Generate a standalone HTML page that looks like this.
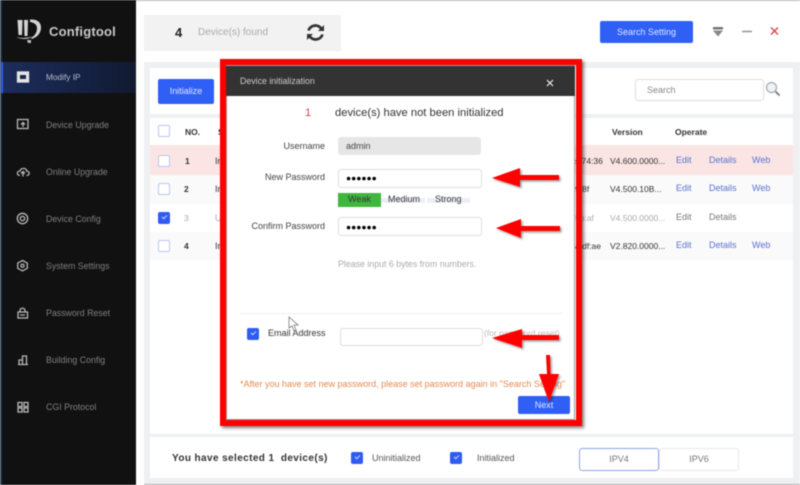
<!DOCTYPE html>
<html><head><meta charset="utf-8">
<style>
html,body{margin:0;padding:0}
body{width:800px;height:485px;overflow:hidden;position:relative;background:#fff;font-family:"Liberation Sans",sans-serif;font-size:9px;color:#333}
#w{position:absolute;left:0;top:0;width:800px;height:485px;overflow:hidden;filter:blur(.45px)}
.a{position:absolute;white-space:nowrap}
.b{position:absolute}
.nav{position:absolute;left:46px;color:#808080;font-size:8.8px;white-space:nowrap}
.cb{position:absolute;width:9.5px;height:9.5px;border:1px solid #b9c6f2;border-radius:2px;background:#fff}
.cb.on{background:#2f5cf0;border-color:#2f5cf0}
.cb.on:after{content:"";position:absolute;left:3px;top:2px;width:4px;height:2px;border-left:1px solid #c8d4ff;border-bottom:1px solid #c8d4ff;transform:rotate(-45deg)}
.row{position:absolute;left:150px;width:643px}
.link{position:absolute;color:#5a72d0;font-size:9px;white-space:nowrap}
.g{position:absolute;color:#777;font-size:9px;white-space:nowrap}
.t{position:absolute;color:#333;font-size:8.5px;white-space:nowrap}
.btn{position:absolute;background:#2f5ff5;border-radius:2px;color:#dfe7ff;font-size:9px;text-align:center}
.inp{position:absolute;left:338px;width:142px;height:17px;border:1px solid #dedede;border-radius:3px;background:#fff}
.lbl{position:absolute;color:#444;font-size:9px;right:475px;white-space:nowrap}
.dots{position:absolute;left:346px;font-size:8.5px;color:#000;white-space:nowrap}
</style></head><body><div id="w">

<div class="b" style="left:0;top:0;width:800px;height:1px;background:#b5b5b5"></div>
<div class="b" style="left:0;top:0;width:136px;height:485px;background:#111"></div>
<div class="b" style="left:0;top:0;width:1.5px;height:485px;background:#26394a"></div>
<div class="b" style="left:136px;top:1px;width:664px;height:484px;background:#fff;border-radius:10px 0 0 0"></div>

<!-- logo -->
<svg class="b" style="left:0;top:0" width="60" height="50" viewBox="0 0 60 50">
<path d="M17.500 20h5l-.5 15h-3.500zM24 20h4l-.5 16h-3z" fill="#d4d4d4"/>
<path d="M30 19.500c7-.5 11 2.500 11 8 0 6-4 9.500-9 11.500l-1-1c4-2.500 6-5.500 6-10 0-3-2.500-5.500-7-6z" fill="#d4d4d4"/>
<path d="M16 37c6 1.500 11 1 16-.5-3 3-10 3.500-16 .5z" fill="#bbb"/><path d="M27 40h4v3h-3z" fill="#bbb"/>
</svg>
<div class="a" style="left:49px;top:24px;font-size:13px;font-weight:bold;color:#c9c9c9;letter-spacing:.2px">Configtool</div>

<!-- nav -->
<div class="b" style="left:1px;top:62px;width:135px;height:31px;background:linear-gradient(90deg,#1d2d5c,#14203f 70%,#121a30)"></div>
<div class="b" style="left:1px;top:62px;width:1.5px;height:31px;background:#2f5ff5"></div>
<div class="nav" style="top:72px;color:#b8bcc8;font-size:8.3px">Modify IP</div>
<div class="nav" style="top:119.500px">Device Upgrade</div>
<div class="nav" style="top:166.500px">Online Upgrade</div>
<div class="nav" style="top:213.500px">Device Config</div>
<div class="nav" style="top:260.500px">System Settings</div>
<div class="nav" style="top:307.500px">Password Reset</div>
<div class="nav" style="top:355px">Building Config</div>
<div class="nav" style="top:402px">CGI Protocol</div>

<svg class="b" style="left:0;top:0" width="40" height="420" viewBox="0 0 40 420" fill="none" stroke="#b8b8b8" stroke-width="1.300">
<rect x="17.500" y="72" width="11" height="10" fill="#e4e4e4" stroke="#e4e4e4"/><rect x="20" y="75" width="6" height="4" fill="#1a2748" stroke="none"/>
<rect x="17.500" y="119.500" width="10.500" height="9"/><path d="M23 127v-4M21 124.500l2-2 2 2"/>
<path d="M20 175.500c-3.500 0-3.500-4.500 0-4.500 1-3.500 6.500-3.500 6.500 0 3.500 0 3.500 4.500 0 4.500M23 176.500v-4.500M21 173.500l2-2 2 2"/>
<circle cx="22.500" cy="218.500" r="5.200"/><circle cx="22.500" cy="218.500" r="2.200"/>
<path d="M22.500 260.500l4.800 2.600v5.200l-4.800 2.600-4.800-2.600v-5.200z"/><circle cx="22.500" cy="265.700" r="1.600"/>
<rect x="18" y="312" width="9.500" height="6"/><path d="M20 312v-1.500c0-3 5-3 5 0v1.500M20 315h5"/>
<path d="M18 364.500h10M19 364.500v-4.500h3.500v4.500M22.500 364.500v-8.500h4v8.500"/>
<rect x="18" y="402.500" width="4" height="4"/><rect x="24" y="402.500" width="4" height="4"/><rect x="18" y="408" width="4" height="4"/><rect x="24" y="408" width="4" height="4"/>
</svg>

<!-- header -->
<div class="b" style="left:144px;top:15px;width:197px;height:36px;background:#f2f2f2"></div>
<div class="a" style="left:175px;top:25px;font-size:13px;font-weight:bold;color:#222">4</div>
<div class="a" style="left:198px;top:26.500px;font-size:10px;color:#aaa">Device(s) found</div>
<svg class="b" style="left:305px;top:22px" width="21" height="21" viewBox="0 0 21 21" fill="none" stroke="#333" stroke-width="2.800">
<path d="M3.500 8.500a7.200 7.200 0 0 1 13-1.500"/><path d="M17.500 12.500a7.200 7.200 0 0 1-13 1.500"/>
<path d="M19 3v6h-6z" fill="#333" stroke="none"/><path d="M2 18v-6h6z" fill="#333" stroke="none"/>
</svg>
<div class="btn" style="left:600px;top:21px;width:93px;height:22px;line-height:22px">Search Setting</div>
<svg class="b" style="left:710px;top:24px" width="70" height="14" viewBox="0 0 70 14">
<path d="M3 3h10v2.500H3z" fill="#777"/><path d="M3 6.500h10l-5 6z" fill="#888"/>
<path d="M32 7.500h10" stroke="#999" stroke-width="1.600"/>
<path d="M61 3.500l7 7M68 3.500l-7 7" stroke="#d65050" stroke-width="1.500"/>
</svg>

<!-- content bg -->
<div class="b" style="left:144px;top:62px;width:656px;height:423px;background:#eff0f2"></div>
<div class="b" style="left:150px;top:68px;width:643px;height:46px;background:#fff"></div>
<div class="b" style="left:150px;top:118px;width:643px;height:316px;background:#fff"></div>
<div class="b" style="left:150px;top:437px;width:643px;height:41px;background:#fff"></div>
<div class="b" style="left:144px;top:484px;width:656px;height:1px;background:#a5a9b3"></div>

<div class="btn" style="left:158px;top:79px;width:56px;height:25px;line-height:25px">Initialize</div>
<div class="b" style="left:635px;top:79px;width:127px;height:20px;border:1px solid #ddd;border-radius:3px;background:#fff"></div>
<div class="a" style="left:647px;top:85px;color:#888">Search</div>
<svg class="b" style="left:765px;top:81px" width="16" height="16" viewBox="0 0 16 16" fill="none"><circle cx="6.500" cy="6.500" r="5" stroke="#aab" stroke-width="1.300" fill="#eef2f6"/><path d="M10.500 10.500l4 4" stroke="#888" stroke-width="2"/></svg>

<!-- table rows -->
<div class="row" style="top:145px;height:30px;background:#fae5e4"></div>
<div class="row" style="top:175px;height:29px;background:#fafafa"></div>
<div class="row" style="top:232px;height:28px;background:#fafafa"></div>

<div class="cb" style="left:158px;top:125px"></div>
<div class="cb" style="left:158px;top:155px"></div>
<div class="cb" style="left:158px;top:183px"></div>
<div class="cb on" style="left:158px;top:212px"></div>
<div class="cb" style="left:158px;top:240px"></div>

<div class="a" style="left:185px;top:126.500px;font-size:8.500px;font-weight:bold;color:#333">NO.</div>
<div class="a" style="left:218px;top:126.500px;font-size:8.500px;font-weight:bold;color:#333">S</div>
<div class="a" style="left:185px;top:156px;color:#333;font-size:8.500px;font-weight:bold">1</div>
<div class="a" style="left:184px;top:184px;color:#333;font-size:8.500px;font-weight:bold">2</div>
<div class="a" style="left:184px;top:213px;color:#aaa;font-size:8.500px">3</div>
<div class="a" style="left:184px;top:241px;color:#333;font-size:8.500px;font-weight:bold">4</div>
<div class="a" style="left:215px;top:156px;font-size:9px">In</div>
<div class="a" style="left:215px;top:184px;font-size:9px">In</div>
<div class="a" style="left:215px;top:213px;font-size:9px;color:#aaa">U</div>
<div class="a" style="left:215px;top:241px;font-size:9px">In</div>

<div class="a" style="left:612px;top:126.500px;font-weight:bold;color:#333;font-size:8.500px">Version</div>
<div class="a" style="left:675px;top:126.500px;font-weight:bold;color:#333;font-size:8.500px">Operate</div>

<div class="t" style="left:575px;top:156px">s 74:36</div>
<div class="t" style="left:575px;top:184px">9:8f</div>
<div class="t" style="left:575px;top:213px;color:#aaa">5b:af</div>
<div class="t" style="left:575px;top:241px">a df:ae</div>
<div class="t" style="left:610px;top:156px">V4.600.0000...</div>
<div class="t" style="left:610px;top:184px">V4.500.10B...</div>
<div class="t" style="left:610px;top:213px;color:#aaa">V4.500.0000...</div>
<div class="t" style="left:610px;top:241px">V2.820.0000...</div>

<div class="link" style="left:676px;top:155px">Edit</div><div class="link" style="left:709px;top:155px">Details</div><div class="link" style="left:752px;top:155px">Web</div>
<div class="link" style="left:676px;top:183px">Edit</div><div class="link" style="left:709px;top:183px">Details</div><div class="link" style="left:752px;top:183px">Web</div>
<div class="g" style="left:676px;top:212px">Edit</div><div class="g" style="left:709px;top:212px">Details</div>
<div class="link" style="left:676px;top:240px">Edit</div><div class="link" style="left:709px;top:240px">Details</div><div class="link" style="left:752px;top:240px">Web</div>

<!-- footer -->
<div class="a" style="left:172px;top:452.500px;font-size:10px;font-weight:bold;color:#333;letter-spacing:.4px">You have selected 1&nbsp; device(s)</div>
<div class="cb on" style="left:351px;top:452px"></div>
<div class="a" style="left:372px;top:452.500px;color:#555">Uninitialized</div>
<div class="cb on" style="left:450px;top:452px"></div>
<div class="a" style="left:477px;top:452.500px;color:#555">Initialized</div>
<div class="b" style="left:659px;top:448px;width:78px;height:21px;border:1px solid #e8e8e8;border-radius:3px;background:#fff;text-align:center;line-height:21px;color:#777">IPV6</div>
<div class="b" style="left:579px;top:448px;width:78px;height:21px;border:1px solid #8ea6e8;border-radius:3px;background:#fff;text-align:center;line-height:21px;color:#777">IPV4</div>

<!-- dialog -->
<div class="b" style="left:220px;top:59px;width:350px;height:355px;border:6px solid #f00;box-shadow:2px 2px 3px rgba(0,0,0,.5)"></div>
<div class="b" style="left:226px;top:65px;width:349px;height:355px;background:#fff;box-shadow:inset 0 0 0 1px #999"></div>
<div class="b" style="left:226px;top:66px;width:349px;height:30px;background:#333"></div>
<div class="a" style="left:240px;top:76px;color:#ccc;font-size:8.800px">Device initialization</div>
<svg class="b" style="left:545px;top:78px" width="10" height="10" viewBox="0 0 10 10"><path d="M2 2l6 6M8 2l-6 6" stroke="#eee" stroke-width="1.200"/></svg>

<div class="a" style="left:305px;top:106.500px;font-size:11px;color:#c44">1</div>
<div class="a" style="left:335px;top:106.500px;font-size:11.200px;color:#333">device(s) have not been initialized</div>

<div class="lbl" style="top:141px">Username</div>
<div class="b" style="left:338px;top:137px;width:143px;height:18px;background:#e6e6e6;border-radius:3px"></div>
<div class="a" style="left:346px;top:141px;color:#444">admin</div>

<div class="lbl" style="top:172px">New Password</div>
<div class="inp" style="top:169px"></div>
<div class="dots" style="top:173px">●●●●●●</div>
<div class="b" style="left:338px;top:193px;width:43px;height:14px;background:#41b63f"></div>
<div class="b" style="left:381px;top:198px;width:44px;height:5px;background:#eceef5"></div>
<div class="b" style="left:427px;top:198px;width:43px;height:5px;background:#eceef5"></div>
<div class="a" style="left:348px;top:194px;color:#333">Weak</div>
<div class="a" style="left:388px;top:194px;color:#333">Medium</div>
<div class="a" style="left:435px;top:194px;color:#333">Strong</div>

<div class="lbl" style="top:221px">Confirm Password</div>
<div class="inp" style="top:217px"></div>
<div class="dots" style="top:222px">●●●●●●</div>

<div class="a" style="left:338px;top:259px;color:#aaa;font-size:8.800px">Please input 6 bytes from numbers.</div>

<div class="b" style="left:240px;top:313px;width:322px;height:1px;background:#eee"></div>
<div class="cb on" style="left:247px;top:328px"></div>
<div class="a" style="left:268px;top:328px;color:#333">Email Address</div>
<div class="b" style="left:340px;top:328px;width:141px;height:16px;border:1px solid #ddd;border-radius:3px;background:#fff"></div>
<div class="a" style="left:484px;top:328px;color:#bbb;font-size:8.500px">(for password reset)</div>

<div class="a" style="left:240px;top:379px;color:#e58a4e;font-size:9px;width:332px;overflow:hidden">*After you have set new password, please set password again in "Search Setting"</div>
<div class="btn" style="left:518px;top:396px;width:52px;height:18px;line-height:19px">Next</div>

<!-- cursor -->
<svg class="b" style="left:288px;top:316px" width="11" height="16" viewBox="0 0 11 16"><path d="M1 1v11l3-2 2 5 2-1-2-5h4z" fill="#fff" stroke="#777" stroke-width=".8"/></svg>

<!-- arrows -->
<svg class="b" style="left:485px;top:160px;overflow:visible" width="90" height="250" viewBox="0 0 90 250">
<defs><filter id="s" x="-20%" y="-20%" width="140%" height="140%"><feDropShadow dx="1.500" dy="1.500" stdDeviation="1" flood-color="#000" flood-opacity=".4"/></filter></defs>
<g fill="#f00" filter="url(#s)">
<path d="M7 18l28-10 0 7h39v5h-39l0 7z"/>
<path d="M11 68l25-9v7h39v5h-39v7z"/>
<path d="M7 178l30-9v6h37v5h-37v8z"/>
<path d="M61 195h4l.5 19h8.500l-10 28-10-28h8z"/>
</g></svg>

</div></body></html>
